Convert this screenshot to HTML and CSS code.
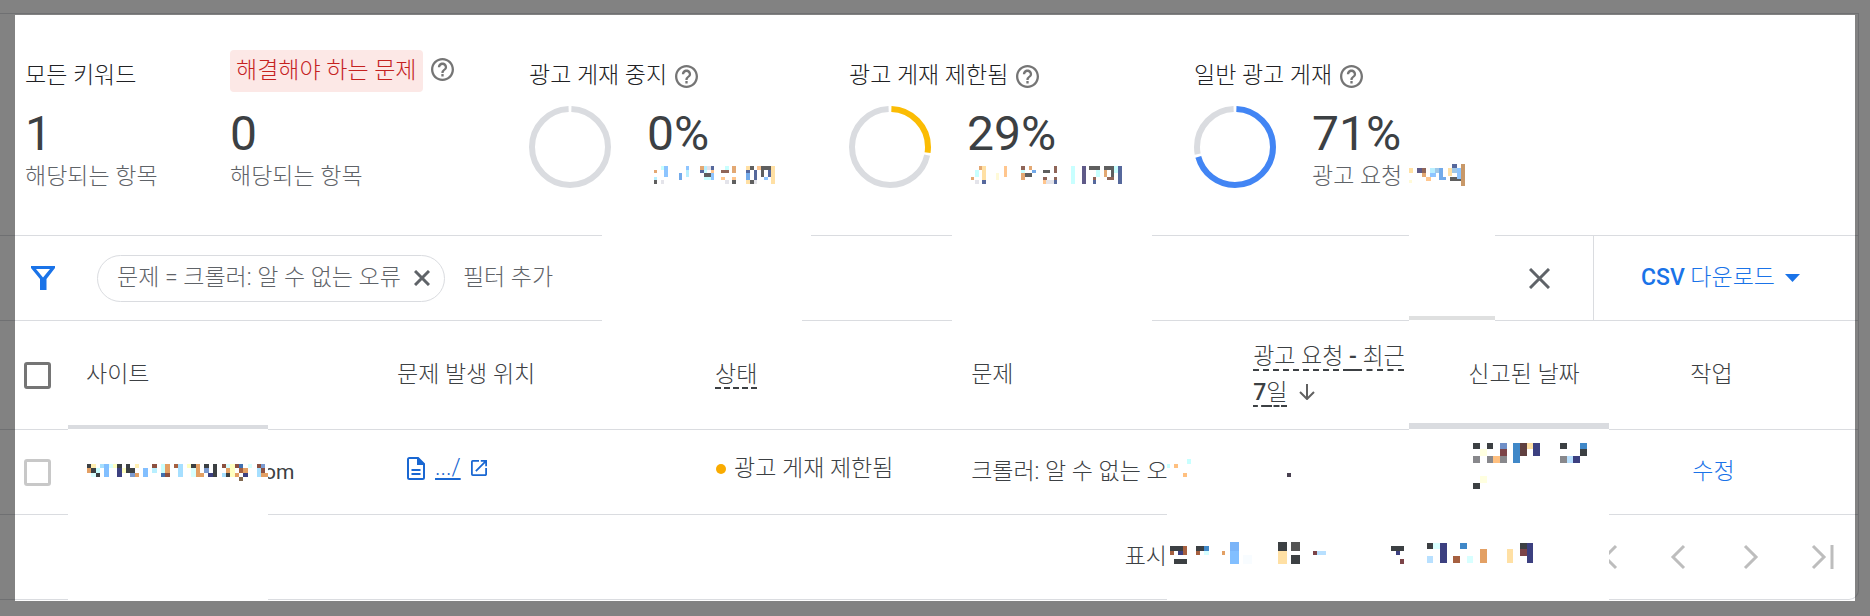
FILE: index.html
```html
<!DOCTYPE html>
<html lang="ko">
<head>
<meta charset="utf-8">
<title>광고 게재 문제</title>
<link rel="stylesheet" href="styles.css">
</head>
<body>
<svg class="defs" aria-hidden="true">
  <symbol id="help" viewBox="2 2 20 20"><path d="M11 18h2v-2h-2v2zm1-16C6.48 2 2 6.48 2 12s4.48 10 10 10 10-4.48 10-10S17.52 2 12 2zm0 18c-4.41 0-8-3.59-8-8s3.59-8 8-8 8 3.59 8 8-3.59 8-8 8zm0-14c-2.21 0-4 1.790-4 4h2c0-1.100.9-2 2-2s2 .9 2 2c0 2-3 1.750-3 5h2c0-2.250 3-2.500 3-5 0-2.210-1.790-4-4-4z"/></symbol>
</svg>
<main class="card">
  <section class="summary">
    <div class="metric">
      <div class="metric-head"><span>모든 키워드</span></div>
      <div class="value">1</div>
      <div class="sub">해당되는 항목</div>
    </div>
    <div class="metric">
      <div class="metric-head alert"><span class="alert-label">해결해야 하는 문제</span><button class="help" aria-label="도움말"><svg><use href="#help"/></svg></button></div>
      <div class="value">0</div>
      <div class="sub">해당되는 항목</div>
    </div>
    <div class="metric">
      <div class="metric-head"><span>광고 게재 중지</span><button class="help" aria-label="도움말"><svg><use href="#help"/></svg></button></div>
      <div class="chart">
        <svg class="donut" viewBox="0 0 82 82"><circle class="rest" cx="41" cy="41" r="38" pathLength="1000" stroke-dasharray="988 12" stroke-dashoffset="-6"/></svg>
        <div><div class="value">0%</div></div>
      </div>
    </div>
    <div class="metric">
      <div class="metric-head"><span>광고 게재 제한됨</span><button class="help" aria-label="도움말"><svg><use href="#help"/></svg></button></div>
      <div class="chart">
        <svg class="donut" viewBox="0 0 82 82"><circle class="rest" cx="41" cy="41" r="38" pathLength="1000" stroke-dasharray="710 290" stroke-dashoffset="-284"/><circle class="limited" cx="41" cy="41" r="38" pathLength="1000" stroke-dasharray="268 732" stroke-dashoffset="-6"/></svg>
        <div><div class="value">29%</div></div>
      </div>
    </div>
    <div class="metric">
      <div class="metric-head"><span>일반 광고 게재</span><button class="help" aria-label="도움말"><svg><use href="#help"/></svg></button></div>
      <div class="chart">
        <svg class="donut" viewBox="0 0 82 82"><circle class="rest" cx="41" cy="41" r="38" pathLength="1000" stroke-dasharray="274 726" stroke-dashoffset="-720"/><circle class="normal" cx="41" cy="41" r="38" pathLength="1000" stroke-dasharray="702 298" stroke-dashoffset="-6"/></svg>
        <div><div class="value">71%</div><div class="sub">광고 요청</div></div>
      </div>
    </div>
  </section>

  <section class="filter-bar">
    <svg class="funnel" viewBox="0 0 24 24"><path fill-rule="evenodd" d="M0 0h24v2l-8.500 11v11h-6.500v-11L0 2zM5 3l7 8.500L19 3z"/></svg>
    <div class="chip"><span>문제 = 크롤러: 알 수 없는 오류</span><button aria-label="필터 삭제"><svg viewBox="0 0 16 16"><path d="M1 1l14 14M15 1L1 15"/></svg></button></div>
    <input class="add-filter" type="text" placeholder="필터 추가" aria-label="필터 추가">
    <button class="clear" aria-label="모두 지우기"><svg viewBox="0 0 21 21"><path d="M1 1l19 19M20 1L1 20"/></svg></button>
    <button class="download"><span><b>CSV</b> 다운로드</span><svg viewBox="0 0 15 8"><path d="M0 0h15L7.500 8z"/></svg></button>
  </section>

  <table>
    <colgroup><col class="c-check"><col class="c-site"><col class="c-place"><col class="c-state"><col class="c-issue"><col class="c-req"><col class="c-date"><col></colgroup>
    <thead>
      <tr>
        <th><input type="checkbox" aria-label="모두 선택"></th>
        <th>사이트</th>
        <th>문제 발생 위치</th>
        <th><span class="hint">상태</span></th>
        <th>문제</th>
        <th><span class="hint">광고 요청 <b>-</b> 최근<br><b>7</b>일</span><svg class="sort" viewBox="0 0 16 16"><path d="M8 0v15M1 8l7 7 7-7"/></svg></th>
        <th>신고된 날짜</th>
        <th>작업</th>
      </tr>
    </thead>
    <tbody>
      <tr>
        <td><input class="light" type="checkbox" aria-label="행 선택"></td>
        <td><div class="site">om</div></td>
        <td>
          <div class="place">
            <svg class="doc" viewBox="0 0 18 23"><path fill-rule="evenodd" d="M2.500 0H11.500L18 6.500V20.500Q18 23 15.500 23H2.500Q0 23 0 20.500V2.500Q0 0 2.500 0zM2 2V21H16V8H10V2zM4.500 12h9v2h-9zM4.500 16h9v2h-9z"/></svg>
            <a href="#">.../</a>
            <svg class="open" viewBox="3 3 18 18"><path d="M19 19H5V5h7V3H5a2 2 0 0 0-2 2v14a2 2 0 0 0 2 2h14c1.100 0 2-.9 2-2v-7h-2v7zM14 3v2h3.590l-9.830 9.830 1.410 1.410L19 6.410V10h2V3h-7z"/></svg>
          </div>
        </td>
        <td><div class="state"><i class="dot"></i>광고 게재 제한됨</div></td>
        <td><div class="issue">크롤러: 알 수 없는 오류</div></td>
        <td></td>
        <td></td>
        <td><a class="fix" href="#">수정</a></td>
      </tr>
    </tbody>
  </table>

  <footer class="pager">
    <span>표시</span>
    <nav>
      <button aria-label="첫 페이지"><svg viewBox="0 0 36 36"><path d="M29 7L18 18l11 11M10 6v24"/></svg></button>
      <button aria-label="이전"><svg viewBox="0 0 36 36"><path d="M24 7L13 18l11 11"/></svg></button>
      <button aria-label="다음"><svg viewBox="0 0 36 36"><path d="M12 7l11 11-11 11"/></svg></button>
      <button aria-label="마지막 페이지"><svg viewBox="0 0 36 36"><path d="M7 7l11 11L7 29M26 6v24"/></svg></button>
    </nav>
  </footer>
</main>
<svg class="redaction" aria-hidden="true"></svg>
<div class="frame"></div>
<script src="redaction.js"></script>
</body>
</html>
```
FILE: styles.css
```css
* { box-sizing: border-box; }
body {
  margin: 0;
  background: #fff;
  color: #3c4043;
  font-family: Roboto, "Noto Sans CJK KR", sans-serif;
  font-size: 23px;
  font-weight: 300;
  line-height: 30px;
}
button {
  display: flex;
  align-items: center;
  padding: 0;
  border: 0;
  background: none;
  color: inherit;
  font: inherit;
  cursor: pointer;
}
b { font-weight: 500; }
.defs { display: none; }
.card {
  margin: 13px 11px 0 0;
  border: 1px solid #dadce0;
  border-left: 0;
  border-radius: 0 0 10px 0;
}

/* summary */
.summary {
  display: grid;
  grid-template-columns: 205fr 299fr 320fr 345fr 664fr;
  padding: 36px 0 43px 25px;
  border-bottom: 1px solid #dadce0;
}
.metric-head {
  display: flex;
  align-items: center;
  gap: 8px;
  height: 56px;
  padding: 0 0 4px;
  color: #202124;
}
.metric-head.alert { align-items: flex-start; }
.alert-label {
  padding: 6px;
  border-radius: 4px;
  background: #fce8e6;
  color: #c5221f;
}
.alert .help { margin-top: 8px; }
.help svg { width: 23px; height: 23px; fill: #757575; }
.value { font-size: 48px; font-weight: 400; line-height: 56px; }
.sub { color: #5f6368; }
.chart { display: flex; gap: 36px; }
.donut {
  width: 82px;
  height: 82px;
  fill: none;
  stroke-width: 6;
  transform: rotate(-90deg);
}
.rest { stroke: #dadce0; }
.limited { stroke: #fbbc04; }
.normal { stroke: #4285f4; }

/* filter bar */
.filter-bar {
  display: flex;
  align-items: center;
  height: 85px;
  padding-left: 31px;
  border-bottom: 1px solid #dadce0;
  color: #5f6368;
}
.funnel { width: 24px; height: 24px; margin-right: 42px; fill: #1a73e8; }
.chip {
  display: flex;
  align-items: center;
  gap: 13px;
  height: 47px;
  padding: 0 14px 0 19px;
  border: 1px solid #dadce0;
  border-radius: 24px;
}
.chip svg { width: 16px; height: 16px; fill: none; stroke: #5f6368; stroke-width: 3; }
.add-filter {
  flex: 1;
  min-width: 0;
  margin-left: 18px;
  padding: 0;
  border: 0;
  outline: 0;
  background: none;
  font: inherit;
}
.add-filter::placeholder { color: #5f6368; opacity: 1; }
.clear svg { width: 21px; height: 21px; fill: none; stroke: #5f6368; stroke-width: 3; }
.download {
  gap: 10px;
  align-self: stretch;
  margin-left: 43px;
  padding: 0 58px 0 47px;
  border-left: 1px solid #dadce0;
  color: #1a73e8;
}
.download svg { width: 15px; height: 8px; fill: #1a73e8; }

/* table */
table { width: 100%; border-collapse: separate; border-spacing: 0; table-layout: fixed; }
.c-check { width: 4.63%; }
.c-site { width: 16.74%; }
.c-place { width: 17.12%; }
.c-state { width: 13.78%; }
.c-issue { width: 15.18%; }
.c-req { width: 11.58%; }
.c-date { width: 11.95%; }
th, td {
  padding: 0;
  border-bottom: 1px solid #dadce0;
  font-weight: 300;
  text-align: left;
  vertical-align: middle;
  white-space: nowrap;
}
th { height: 109px; line-height: 36px; }
td { height: 85px; }
input[type="checkbox"] {
  display: block;
  width: 27px;
  height: 27px;
  margin: 0 0 0 24px;
  border: 3px solid #757575;
  border-radius: 3px;
  appearance: none;
}
input.light { border-color: #c8c8c8; }
.hint {
  text-decoration: underline dashed 2px;
  text-underline-offset: 5px;
}
.sort {
  width: 16px;
  height: 16px;
  margin-left: 12px;
  fill: none;
  stroke: #616161;
  stroke-width: 2;
}
.site { padding-left: 178px; font-size: 21px; font-weight: 400; }
.place { display: flex; align-items: center; gap: 10px; padding: 0 0 8px 10px; }
.place a { color: #1967d2; text-decoration-thickness: 2px; text-underline-offset: 3px; }
.doc { width: 18px; height: 23px; fill: #1967d2; }
.open { width: 16px; height: 16px; fill: #1967d2; }
.state { display: flex; align-items: center; gap: 8px; padding: 0 0 7px 1px; }
.dot { width: 10px; height: 10px; border-radius: 50%; background: #f9ab00; }
.fix { padding-left: 2px; color: #1a73e8; text-decoration: none; }

/* pager */
.pager { display: flex; align-items: center; justify-content: flex-end; height: 84px; }
.pager span { margin-right: 420px; }
.pager nav { display: flex; gap: 37px; padding-right: 16px; }
.pager svg { width: 36px; height: 36px; fill: none; stroke: #bdbdbd; stroke-width: 3; }

/* overlays */
.redaction {
  position: absolute;
  top: 0;
  left: 0;
  width: 1870px;
  height: 616px;
  pointer-events: none;
  shape-rendering: crispEdges;
}
.frame {
  position: fixed;
  inset: 0;
  border: 15px solid rgba(0, 0, 0, 0.49);
  pointer-events: none;
}
```
FILE: redaction.js
```js
// Masked areas: white covers first, then the pixelated blocks, as "x y w h" lists by colour.
const blocks = [
  ["#ffffff", "602 200 209 60,602 260 200 61,952 200 200 121,1409 200 86 116,1409 320 86 1,68 429 200 171,1167 430 442 170,1409 429 200 1"],
  ["#dfe0e0", "1409 316 86 4"],
  ["#dadce0", "68 425 200 4,1409 423 200 6"],
  ["#5f5f5f", "654 180 3 4,704 173 7 4,732 180 4 4,750 166 4 4,761 166 10 4,761 170 3 7,750 180 4 4,1025 173 7 4,1043 170 7 3,1089 166 11 4,1104 166 10 4,1111 170 3 7,1450 177 11 4"],
  ["#c8ffff", "661 166 3 4,704 170 3 3,704 177 7 3,725 166 4 4,975 170 4 7,1021 170 4 3,1071 166 4 18,1096 170 4 7,1114 166 4 7,161 464 4 9,96 468 4 5,1167 464 3 4,1187 459 4 5"],
  ["#8ec5ff", "664 166 4 11,686 166 3 4,711 173 3 7,764 177 4 3,1430 173 6 4,1457 168 4 11"],
  ["#e3a873", "654 170 3 3,700 166 4 4,732 166 4 7,979 166 4 4,971 177 3 3,1021 173 4 7,1104 170 3 7,1422 173 4 4,1029 166 3 4"],
  ["#b8efff", "654 177 3 3,686 170 3 7,1430 168 5 5,152 468 5 5,704 166 3 4"],
  ["#56689c", "711 166 3 4,700 170 4 3,746 170 4 3,754 170 3 10,768 170 3 7,1054 180 3 4,1093 180 3 4,1118 166 4 18,982 180 4 4,1452 164 5 4"],
  ["#5f5a88", "1082 166 4 18,1417 168 5 5"],
  ["#72aaea", "679 173 3 7,746 173 4 7,1032 170 4 3,1439 168 4 11,1439 177 7 3"],
  ["#ffc68e", "711 170 3 3,721 177 4 3,732 177 4 3,757 166 4 4,1004 166 3 11,1043 180 4 4,1426 177 5 4"],
  ["#ffe0a4", "771 166 4 18,746 166 4 4,746 180 4 4,982 166 4 14,1409 168 4 5,1448 168 4 8"],
  ["#fffad8", "996 173 3 7,1409 180 3 3"],
  ["#e4e4ea", "661 180 3 4,707 166 4 4,725 180 4 4,754 180 3 4,975 180 4 4,1046 180 8 4"],
  ["#8f6558", "721 170 8 3,1021 166 4 4,1054 166 3 7,1043 177 4 3,1054 177 3 3,1093 177 3 3,1107 177 7 3,1422 168 4 5"],
  ["#a0c8e8", "1435 168 4 5,1452 168 5 5"],
  ["#c89868", "1461 164 4 22"],
  ["#3c4043", "87 464 4 4,117 464 5 4,126 464 4 4,126 468 9 5,191 464 5 4,204 464 5 4,213 464 4 13,226 473 4 4,91 468 5 5,96 473 4 4"],
  ["#ffeeb0", "91 464 5 4,135 464 4 4"],
  ["#a6dfff", "100 464 4 4,178 464 5 13,222 473 4 4,257 468 4 9"],
  ["#82bfff", "104 464 5 13,143 468 5 9"],
  ["#d8ffff", "109 464 4 4,91 473 5 4,191 468 5 9,226 464 4 4,248 464 4 4"],
  ["#ffffc0", "113 464 4 4,122 468 4 5,187 464 4 4,230 464 5 13"],
  ["#8c5040", "152 464 5 4,222 464 4 4,235 464 4 4,257 464 4 4,261 468 4 5,165 473 5 4"],
  ["#e3a064", "165 464 5 9,196 464 4 13,226 468 4 5,135 473 4 4,243 468 5 5,261 473 7 4,87 468 4 5,200 473 4 4,235 473 4 4"],
  ["#a66040", "174 464 4 4,239 468 4 5"],
  ["#4070b0", "239 464 4 4,161 473 4 4"],
  ["#7a9ad0", "261 464 4 4,130 473 5 4,204 468 5 5"],
  ["#3c4080", "117 468 5 9,208 473 5 4,243 473 5 4"],
  ["#806850", "239 477 4 4"],
  ["#ffc080", "1174 464 4 4,1183 473 4 4,1493 456 7 7"],
  ["#484050", "1287 473 4 4"],
  ["#3c4043", "1170 546 13 5,1174 559 13 5,1196 546 8 5,1278 542 9 9,1291 555 9 9,1391 546 13 5,1473 443 7 6,1487 443 6 6,1560 443 7 6,1580 449 7 7,1427 543 6 6,1520 543 7 6,1473 483 7 6"],
  ["#555555", "1291 542 9 9"],
  ["#a66040", "1183 546 4 9,1196 551 4 4,1453 556 7 7,1170 551 4 4"],
  ["#3c4080", "1178 551 5 4,1396 551 4 4,1533 443 7 13,1573 456 7 7,1440 543 7 20,1527 543 6 20"],
  ["#4088c8", "1204 546 5 5,1513 443 7 20,1580 443 7 6,1460 543 7 6"],
  ["#d8ffff", "1204 551 5 4,1433 543 7 6,1467 556 6 7"],
  ["#e3a064", "1222 551 3 4,1480 549 7 14"],
  ["#7ab4f8", "1230 542 9 9"],
  ["#82bfff", "1230 551 9 13"],
  ["#f8fcff", "1243 555 9 9"],
  ["#ffe0a4", "1278 551 9 13,1527 443 6 6,1507 549 6 14"],
  ["#b8e0ff", "1317 551 9 4,1567 456 6 7,1427 556 6 7"],
  ["#7c4448", "1313 551 4 4,1400 559 4 5,1500 449 7 7,1520 549 7 7"],
  ["#604040", "1520 443 7 13"],
  ["#7090c8", "1500 443 7 6"],
  ["#ffffe0", "1480 449 7 7,1480 476 7 7"],
  ["#88888c", "1473 456 7 7,1487 456 6 7,1500 456 7 7,1560 456 7 7"]
];
const layer = document.querySelector(".redaction");
for (const [fill, list] of blocks) {
  const path = document.createElementNS("http://www.w3.org/2000/svg", "path");
  path.setAttribute("fill", fill);
  path.setAttribute("d", list.split(",").map(item => {
    const [x, y, w, h] = item.split(" ");
    return `M${x} ${y}h${w}v${h}h-${w}z`;
  }).join(""));
  layer.append(path);
}
```
